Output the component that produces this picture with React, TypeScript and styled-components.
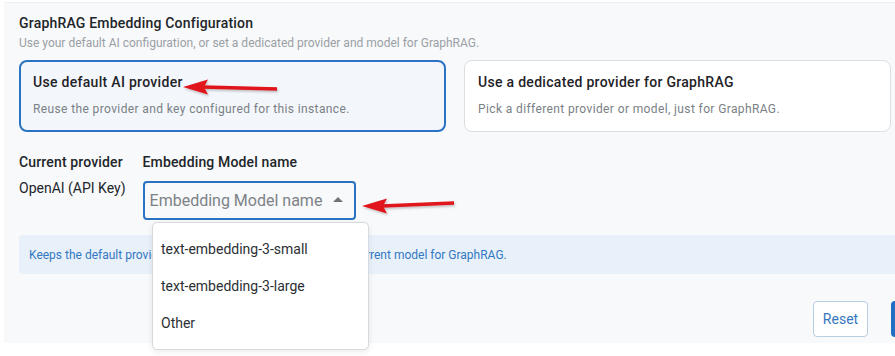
import React from "react";
import styled, { createGlobalStyle } from "styled-components";

const Global = createGlobalStyle`
  html, body { margin: 0; padding: 0; background: #ffffff; overflow: hidden; }
  body { font-family: Roboto, "Noto Sans", "Liberation Sans", sans-serif; }
  * { box-sizing: border-box; }
`;

const Page = styled.div`
  width: 895px;
  height: 356px;
  padding: 2px 0 0 4px;
  overflow: hidden;
  position: relative;
`;

const Panel = styled.section`
  position: relative;
  width: 960px;
  height: 341px;
  background: #f8f9fa;
  border-top: 1px solid #eef0f2;
  padding: 10px 0 0 15px;
`;

const Title = styled.h2`
  margin: 0;
  font-size: 14px;
  line-height: 20px;
  font-weight: 500;
  letter-spacing: 0.2px;
  color: #212529;
`;

const Subtitle = styled.p`
  margin: 0;
  font-size: 12px;
  line-height: 20px;
  color: #9aa0a6;
`;

const CardRow = styled.div`
  display: grid;
  grid-template-columns: 427px 427px;
  gap: 18px;
  margin-top: 7px;
`;

const Card = styled.div<{ $active?: boolean }>`
  height: 72px;
  border-radius: 8px;
  border: ${(p) => (p.$active ? "2px solid #2a72c2" : "1px solid #dcdfe3")};
  background: ${(p) => (p.$active ? "#f3f7fb" : "#ffffff")};
  padding: ${(p) => (p.$active ? "10px 12px 0 12px" : "11px 13px 0 13px")};
  display: flex;
  flex-direction: column;
`;

const CardTitle = styled.div`
  font-size: 14px;
  line-height: 20px;
  font-weight: 500;
  letter-spacing: 0.3px;
  color: #1f2328;
`;

const CardDesc = styled.div`
  margin-top: 9px;
  font-size: 12px;
  line-height: 16px;
  color: #7a7f85;
  letter-spacing: 0.38px;
`;

const FieldRow = styled.div`
  display: flex;
  gap: 17px;
  margin-top: 20px;
`;

const Field = styled.div`
  display: flex;
  flex-direction: column;
`;

const Label = styled.div`
  font-size: 14px;
  line-height: 20px;
  font-weight: 500;
  letter-spacing: 0.15px;
  color: #212529;
`;

const Value = styled.div`
  margin-top: 6px;
  font-size: 14px;
  line-height: 20px;
  color: #212529;
`;

const SelectBox = styled.div`
  margin-top: 9px;
  width: 213px;
  height: 39px;
  border: 2px solid #2a72c2;
  border-radius: 4px;
  padding: 0 11px 0 5px;
  display: flex;
  align-items: center;
  justify-content: space-between;
  font-size: 16px;
  color: #7d8288;
  background: #f8f9fa;
`;

const Caret = styled.span`
  width: 0;
  height: 0;
  border-left: 5px solid transparent;
  border-right: 5px solid transparent;
  border-bottom: 5px solid #707479;
  margin-bottom: 2px;
`;

const InfoBox = styled.div`
  margin-top: 15px;
  height: 39px;
  width: 900px;
  border-radius: 4px;
  background: #e8f0fa;
  display: flex;
  align-items: center;
  padding-left: 10px;
  font-size: 12px;
  color: #3478c2;
`;

const Actions = styled.div`
  display: flex;
  gap: 23px;
  margin-top: 27px;
  padding-left: 794px;
`;

const OutlineButton = styled.button`
  flex: 0 0 55px;
  height: 36px;
  border: 1px solid #b9cde3;
  border-radius: 4px;
  background: #ffffff;
  color: #3676be;
  font-family: inherit;
  font-size: 14px;
  padding: 0;
`;

const PrimaryButton = styled.button`
  flex: 0 0 70px;
  height: 36px;
  border: none;
  border-radius: 4px;
  background: #1f6fc5;
  color: #ffffff;
  font-family: inherit;
  font-size: 14px;
`;

const Menu = styled.ul`
  position: absolute;
  left: 148px;
  top: 219px;
  width: 217px;
  height: 128px;
  margin: 0;
  padding: 7px 0;
  list-style: none;
  background: #ffffff;
  border: 1px solid #d6d9dd;
  border-radius: 5px;
  box-shadow: 0 2px 6px rgba(0, 0, 0, 0.08);
`;

const MenuItem = styled.li`
  height: 37px;
  display: flex;
  align-items: center;
  padding-left: 8px;
  font-size: 14px;
  color: #2b2f33;
`;

const Arrow = styled.svg`
  position: absolute;
  overflow: visible;
`;

function RedArrow({ left, top, width, tilt }: { left: number; top: number; width: number; tilt: number }) {
  return (
    <Arrow style={{ left, top }} width={width} height={20} viewBox={`0 0 ${width} 20`}>
      <defs>
        <filter id={`sh${left}`} x="-10%" y="-50%" width="120%" height="200%">
          <feDropShadow dx="1" dy="1.5" stdDeviation="1" floodColor="#000" floodOpacity="0.25" />
        </filter>
      </defs>
      <g filter={`url(#sh${left})`}>
        <path d={`M20 8.3 L${width} ${8.3 + tilt} L${width} ${11.7 + tilt} L20 11.7 Z`} fill="#e0141b" />
        <path d="M0 10 L25 2.5 L21 10 L25 17.5 Z" fill="#e0141b" />
      </g>
    </Arrow>
  );
}

export default function App() {
  return (
    <>
      <Global />
      <Page>
        <Panel>
          <Title>GraphRAG Embedding Configuration</Title>
          <Subtitle>Use your default AI configuration, or set a dedicated provider and model for GraphRAG.</Subtitle>
          <CardRow>
            <Card $active>
              <CardTitle>Use default AI provider</CardTitle>
              <CardDesc>Reuse the provider and key configured for this instance.</CardDesc>
            </Card>
            <Card>
              <CardTitle>Use a dedicated provider for GraphRAG</CardTitle>
              <CardDesc>Pick a different provider or model, just for GraphRAG.</CardDesc>
            </Card>
          </CardRow>
          <FieldRow>
            <Field>
              <Label>Current provider</Label>
              <Value>OpenAI (API Key)</Value>
            </Field>
            <Field>
              <Label>Embedding Model name</Label>
              <SelectBox>
                <span>Embedding Model name</span>
                <Caret />
              </SelectBox>
            </Field>
          </FieldRow>
          <InfoBox>
            Keeps the default provider and its key, and only overrides the current model for GraphRAG.
          </InfoBox>
          <Actions>
            <OutlineButton>Reset</OutlineButton>
            <PrimaryButton>Save</PrimaryButton>
          </Actions>
          <Menu>
            <MenuItem>text-embedding-3-small</MenuItem>
            <MenuItem>text-embedding-3-large</MenuItem>
            <MenuItem>Other</MenuItem>
          </Menu>
          <RedArrow left={179} top={74} width={94} tilt={2} />
          <RedArrow left={358} top={193} width={92} tilt={-3} />
        </Panel>
      </Page>
    </>
  );
}
